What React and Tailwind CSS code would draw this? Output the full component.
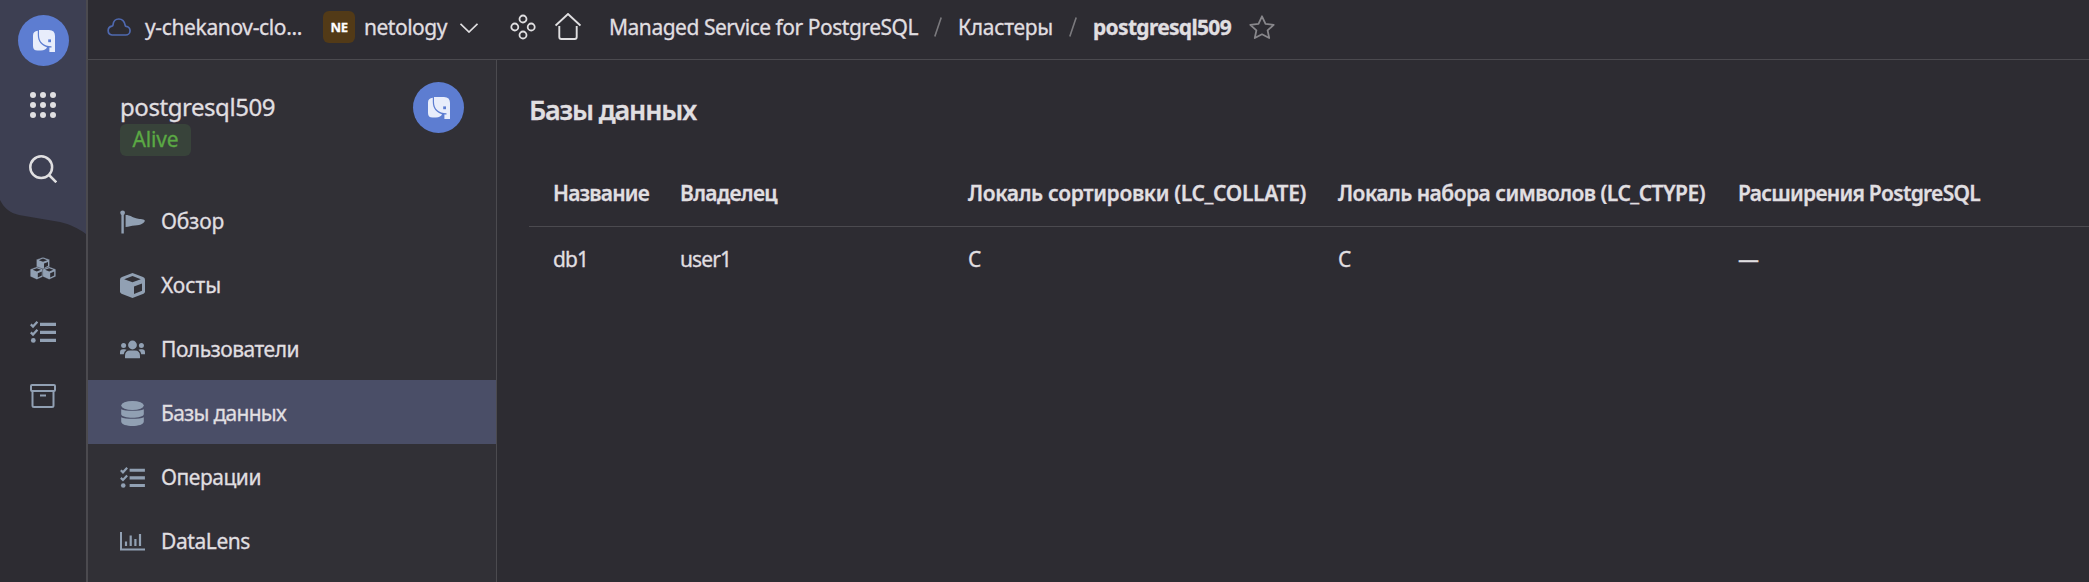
import React, { useRef, useLayoutEffect, useState } from "react";

function Elephant({ className }) {
  return (
    <svg viewBox="0 0 22 22" className={className} fill="#e8edfb">
      <path d="M6 0H16Q22 0 22 6V22H16.4V17.6H18.5V16.3C11 16.3 6 12 6 5Z" />
      <path d="M4.8 .8V5C4.8 11.5 8.5 15.6 14 17.2C13.6 19 11 20.6 8 20.6H4.5Q0 20.6 0 16V5.5Q0 1.4 4.8 .8Z" />
      <rect x="15.2" y="9.4" width="2.8" height="2.8" fill="#5d7dd1" />
    </svg>
  );
}

function Avatar() {
  return (
    <div className="flex size-[51px] shrink-0 items-center justify-center rounded-full bg-[#5d7dd1]">
      <Elephant className="mt-px ml-px size-[22px]" />
    </div>
  );
}

function Cubes() {
  return (
    <svg viewBox="0 0 26 23" className="w-[26px] h-[23px]">
      {[[6.2, 0], [0, 9.6], [12.4, 9.6]].map(([x, y]) => (
        <g key={x} transform={`translate(${x} ${y})`}>
          <path d="M6.800 .2 13.400 2.6V10L6.800 13 .2 10V2.600Z" fill="#91a0b3" stroke="#2d2c32" strokeWidth=".4" />
          <path d="M6.800 1.600 11 3.200 6.800 4.800 2.600 3.200ZM7.800 6.600 11.800 5V8.800L7.800 10.900Z" fill="#2d2c32" />
        </g>
      ))}
    </svg>
  );
}

function Checklist({ className }) {
  return (
    <svg viewBox="0 0 26 22" className={className} stroke="#91a0b3" fill="none">
      <path d="M10 3.4H26M10 11.4H26M10 19.4H26" strokeWidth="3.2" />
      <path d="M.8 3.4 3 5.6 7.4.8M.8 11.4 3 13.6 7.4 8.8" strokeWidth="2.3" />
      <circle cx="3.3" cy="19.4" r="2.4" fill="#91a0b3" stroke="none" />
    </svg>
  );
}

function Box() {
  return (
    <svg viewBox="0 0 26 24" className="w-[26px] h-6" stroke="#91a0b3" fill="none" strokeWidth="2">
      <rect x="1" y="1" width="24" height="6" rx="1" />
      <path d="M2.5 7V21.5Q2.5 23 4 23H22Q23.500 23 23.500 21.500V7M10 11.600H16" />
    </svg>
  );
}

const icons = {
  flag: (
    <svg viewBox="0 0 25 25" className="size-[25px]" fill="#91a0b3">
      <circle cx="2.6" cy="3.800" r="2.400" />
      <rect x="1.400" y="4" width="2.400" height="20.500" />
      <path d="M5.600 6.100C10 6 12 8.500 17 9.500C20 10.100 24.800 10.300 24.800 11.600C24.800 14 21 16.200 15 16.600C11 16.900 9 17.800 5.600 18Z" />
    </svg>
  ),
  cube: (
    <svg viewBox="0 0 25 25" className="size-[25px]">
      <path d="M12.500 0 23 4Q25 4.800 25 6.500V18.500Q25 20 23.500 20.800L12.500 25 1.500 20.800Q0 20 0 18.500V6.500Q0 4.800 2 4Z" fill="#91a0b3" />
      <path d="M12.500 3.100 20.800 6.200 12.500 9.300 4.200 6.200ZM14 13.500 22 10.500V17.800L14 21Z" fill="#313036" />
    </svg>
  ),
  users: (
    <svg viewBox="0 0 25 25" className="size-[25px]" fill="#91a0b3">
      <circle cx="12.500" cy="8" r="4.400" />
      <circle cx="3.600" cy="8.600" r="2.500" />
      <circle cx="21.400" cy="8.600" r="2.500" />
      <path d="M5 21V19Q5 13.500 10 13.500H15Q20 13.500 20 19V21Q20 21.300 18.500 21.300H6.500Q5 21.300 5 21ZM0 17V15.500Q0 12.200 3 12.200H4.500Q6 12.200 6.500 12.800Q4 14.500 3.700 17.200H0ZM25 17V15.500Q25 12.200 22 12.200H20.500Q19 12.200 18.500 12.800Q21 14.500 21.300 17.200H25Z" />
    </svg>
  ),
  db: (
    <svg viewBox="0 0 25 25" className="size-[25px]" fill="#91a0b3">
      <ellipse cx="12.500" cy="4.500" rx="11.300" ry="4.500" />
      <path d="M1.200 8.200C5 10.400 20 10.400 23.800 8.200V13C23.800 18 1.200 18 1.200 13ZM1.200 16.200C5 18.400 20 18.400 23.800 16.200V20.500C23.800 26.500 1.200 26.500 1.200 20.500Z" />
    </svg>
  ),
  list: <Checklist className="w-[25px] h-[21px]" />,
  chart: (
    <svg viewBox="0 0 25 25" className="size-[25px]" stroke="#91a0b3" fill="none" strokeWidth="2">
      <path d="M1 3V20.500H25" />
      <path d="M6 12.500V17M10.700 6.500V17M15.400 10V17M20 5V17" strokeWidth="2.200" />
    </svg>
  ),
};

function T({ w, className = "", children }) {
  const ref = useRef(null);
  const [ls, setLs] = useState(0);
  useLayoutEffect(() => {
    const cur = ref.current.getBoundingClientRect().width;
    setLs(children.length > 1 ? (w - cur) / children.length : 0);
  }, []);
  return (
    <span ref={ref} className={`inline-block shrink-0 whitespace-nowrap ${className}`} style={{ letterSpacing: ls }}>
      {children}
    </span>
  );
}

const menu = [
  ["flag", "Обзор", 63],
  ["cube", "Хосты", 60],
  ["users", "Пользователи", 138],
  ["db", "Базы данных", 125],
  ["list", "Операции", 100],
  ["chart", "DataLens", 89],
];

const columns = [
  ["w-[127px]", "Название", 96, "db1", 35],
  ["w-[288px]", "Владелец", 97, "user1", 51],
  ["w-[370px]", "Локаль сортировки (LC_COLLATE)", 338, "C", 15],
  ["w-[400px]", "Локаль набора символов (LC_CTYPE)", 367, "C", 15],
  ["flex-1", "Расширения PostgreSQL", 242, "—", 20],
];

function Header() {
  return (
    <header className="flex h-[60px] shrink-0 items-center border-b border-[#4b4a4f] pb-1.5 pl-[19px]">
      <svg viewBox="0 0 24 18" className="w-6 h-[18px] shrink-0" fill="none" stroke="#4f69b0" strokeWidth="1.700">
        <path d="M5 17H18.500A4.300 4.300 0 0 0 19 8.400C18.600 8.400 18.300 8 18.200 7.300C17.500 3.500 15 1 11.800 1C8.500 1 6.200 3.500 6 7C6 7.600 5.600 8 5 8.100A4.500 4.500 0 0 0 5 17Z" />
      </svg>
      <T w={157} className="ml-3.5">y-chekanov-clo...</T>
      <div className="ml-[21px] flex size-8 shrink-0 items-center justify-center rounded-md bg-[#523a17] text-[13px] font-bold text-white">
        <T w={17}>NE</T>
      </div>
      <T w={83} className="ml-[9px]">netology</T>
      <svg viewBox="0 0 18 10" className="ml-[13px] mt-0.5 h-2.5 w-[18px] shrink-0" fill="none" stroke="#e0dfe1" strokeWidth="1.700">
        <path d="M.500.800 9 9 17.500.800" />
      </svg>
      <svg viewBox="0 0 26 26" className="ml-8 size-[26px] shrink-0" fill="none" stroke="#e0dfe1" strokeWidth="1.800">
        <circle cx="13" cy="5" r="3.500" />
        <circle cx="4.800" cy="13" r="3.500" />
        <circle cx="21.200" cy="13" r="3.500" />
        <circle cx="13" cy="21" r="3.500" />
      </svg>
      <svg viewBox="0 0 26 27" className="ml-[19px] h-[27px] w-[26px] shrink-0" fill="none" stroke="#e0dfe1" strokeWidth="1.900">
        <path d="M.600 12.600 13 1 25.400 12.600M4.300 13V24Q4.300 26 6.300 26H19.700Q21.700 26 21.700 24V13" />
      </svg>
      <T w={309} className="ml-[28px]">Managed Service for PostgreSQL</T>
      <Slash />
      <T w={95}>Кластеры</T>
      <Slash />
      <T w={138} className="font-bold">postgresql509</T>
      <svg viewBox="0 0 26 24" className="ml-[18px] h-6 w-[26px] shrink-0" fill="none" stroke="#88878b" strokeWidth="1.800" strokeLinejoin="round">
        <path d="M13 1.300 16.500 8.800 24.700 9.800 18.600 15.400 20.200 23 13 19.300 5.800 23 7.400 15.400 1.300 9.800 9.500 8.800Z" />
      </svg>
    </header>
  );
}

function Slash() {
  return (
    <svg viewBox="0 0 8 20" className="mx-4 h-5 w-2 shrink-0" stroke="#7b7a7e" strokeWidth="1.600">
      <path d="M.800 19.500 7.200.500" />
    </svg>
  );
}

export default function App() {
  return (
    <div className="flex h-[582px] w-[2089px] overflow-hidden bg-[#2d2c32] font-['Noto_Sans',sans-serif] text-[21px] leading-8 text-[#e0dfe1] [-webkit-text-stroke:0.3px]">
      <aside className="relative flex w-[88px] shrink-0 flex-col items-center border-r-2 border-[#4b4a4f]">
        <svg viewBox="0 0 86 236" className="absolute top-0 left-0 h-[236px] w-[86px]">
          <path d="M0 0H86V234C78 228 70 224.500 60 222L19 215C10 213 4 208 0 200Z" fill="#3d3f52" />
        </svg>
        <div className="relative flex flex-col items-center pt-[15px]">
          <Avatar />
          <svg viewBox="0 0 26 26" className="mt-[26px] size-[26px]" fill="#e0dfe1">
            {[3, 13, 23].map((y) => [3, 13, 23].map((x) => <circle key={`${x}-${y}`} cx={x} cy={y} r="3" />))}
          </svg>
          <svg viewBox="0 0 28 28" className="mt-[37px] size-7" fill="none" stroke="#e0dfe1" strokeWidth="2.500">
            <circle cx="12.200" cy="12.200" r="10.900" />
            <path d="M20 20 27.300 27.300" />
          </svg>
          <div className="mt-[74px]"><Cubes /></div>
          <Checklist className="mt-[41px] h-[22px] w-[26px]" />
          <div className="mt-[41px]"><Box /></div>
        </div>
      </aside>
      <div className="flex min-w-0 flex-1 flex-col">
        <Header />
        <div className="flex min-h-0 flex-1">
          <nav className="flex w-[409px] shrink-0 flex-col border-r border-[#4b4a4f] bg-[#313036]">
            <div className="flex h-[128px] shrink-0 justify-between pt-[22px] pr-8 pl-8">
              <div className="flex flex-col items-start pt-2.5">
                <T w={155} className="-mt-px mb-px text-[24px]">postgresql509</T>
                <div className="flex h-8 w-[71px] items-center justify-center rounded-md bg-[#38433a] pb-0.5 text-[#5ba944]">
                  <T w={46}>Alive</T>
                </div>
              </div>
              <Avatar />
            </div>
            {menu.map(([icon, label, w]) => (
              <div key={label} className={`flex h-16 shrink-0 items-center pl-8 ${icon === "db" ? "bg-[#4a4e67]" : ""}`}>
                <span className="mr-4 flex w-[25px] justify-center pt-[3px]">{icons[icon]}</span>
                <T w={w} className="pt-px">{label}</T>
              </div>
            ))}
          </nav>
          <main className="min-w-0 flex-1 pt-[34px] pl-8">
            <h1 className="text-[27px] font-semibold"><T w={167}>Базы данных</T></h1>
            <div className="mt-[34px] flex h-[67px] items-center border-b border-[#4b4a4f] pl-6 font-semibold">
              {columns.map(([cls, label, w]) => (
                <div key={label} className={`shrink-0 ${cls}`}><T w={w}>{label}</T></div>
              ))}
            </div>
            <div className="flex h-16 items-center pl-6">
              {columns.map(([cls, label, , value, w]) => (
                <div key={label} className={`shrink-0 ${cls}`}><T w={w}>{value}</T></div>
              ))}
            </div>
          </main>
        </div>
      </div>
    </div>
  );
}
